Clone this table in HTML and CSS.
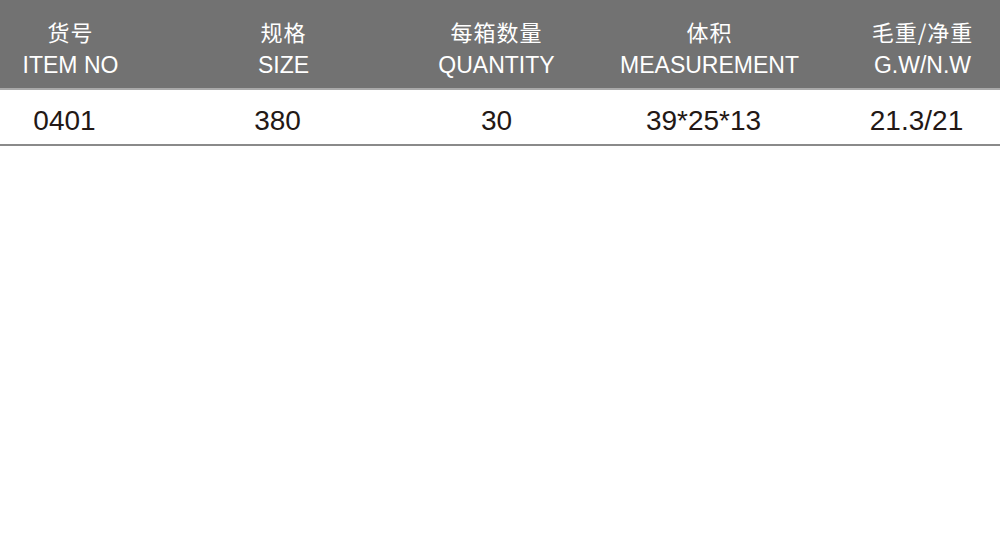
FILE: index.html
```html
<!DOCTYPE html>
<html lang="zh-CN">
<head>
    <meta charset="UTF-8">
    <meta name="viewport" content="width=device-width, initial-scale=1.0">
    <title>产品参数</title>
    <link rel="stylesheet" href="styles.css">
</head>
<body>
    <div class="spec-table">
        <div class="spec-head">
            <div class="cell"><span class="cn">货号</span><span class="en">ITEM NO</span></div>
            <div class="cell"><span class="cn">规格</span><span class="en">SIZE</span></div>
            <div class="cell"><span class="cn">每箱数量</span><span class="en">QUANTITY</span></div>
            <div class="cell"><span class="cn">体积</span><span class="en">MEASUREMENT</span></div>
            <div class="cell"><span class="cn">毛重/净重</span><span class="en">G.W/N.W</span></div>
        </div>
        <div class="spec-row">
            <div class="cell">0401</div>
            <div class="cell">380</div>
            <div class="cell qty">30</div>
            <div class="cell">39*25*13</div>
            <div class="cell">21.3/21</div>
        </div>
    </div>
</body>
</html>
```

FILE: styles.css
```css
body {
    margin: 0;
    background: #fff;
    font-family: "Liberation Sans", Arial, "Noto Sans CJK SC", sans-serif;
    overflow: hidden;
}
.spec-table {
    width: 1065px;
    margin-left: -36px;
}
.spec-head,
.spec-row {
    display: grid;
    grid-template-columns: repeat(5, 213px);
}
.spec-head {
    height: 88px;
    background-color: #727272;
    color: #fff;
    border-bottom: 2px solid #a9a9a9;
}
.spec-head .cell {
    display: flex;
    flex-direction: column;
    align-items: center;
    padding-top: 17px;
}
.spec-head .cn {
    font-family: "Noto Sans CJK SC", sans-serif;
    font-size: 22px;
    line-height: 28px;
    letter-spacing: 1px;
}
.spec-head .en {
    font-size: 23px;
    line-height: 34px;
    margin-top: 3px;
}
.spec-row {
    height: 54px;
    border-bottom: 2px solid #8a8a8a;
    color: #231815;
    font-size: 28px;
}
.spec-row .cell {
    display: flex;
    align-items: center;
    justify-content: center;
    padding-right: 12px;
    padding-top: 8px;
    box-sizing: border-box;
}
.spec-row .qty {
    padding-right: 0;
}
```
